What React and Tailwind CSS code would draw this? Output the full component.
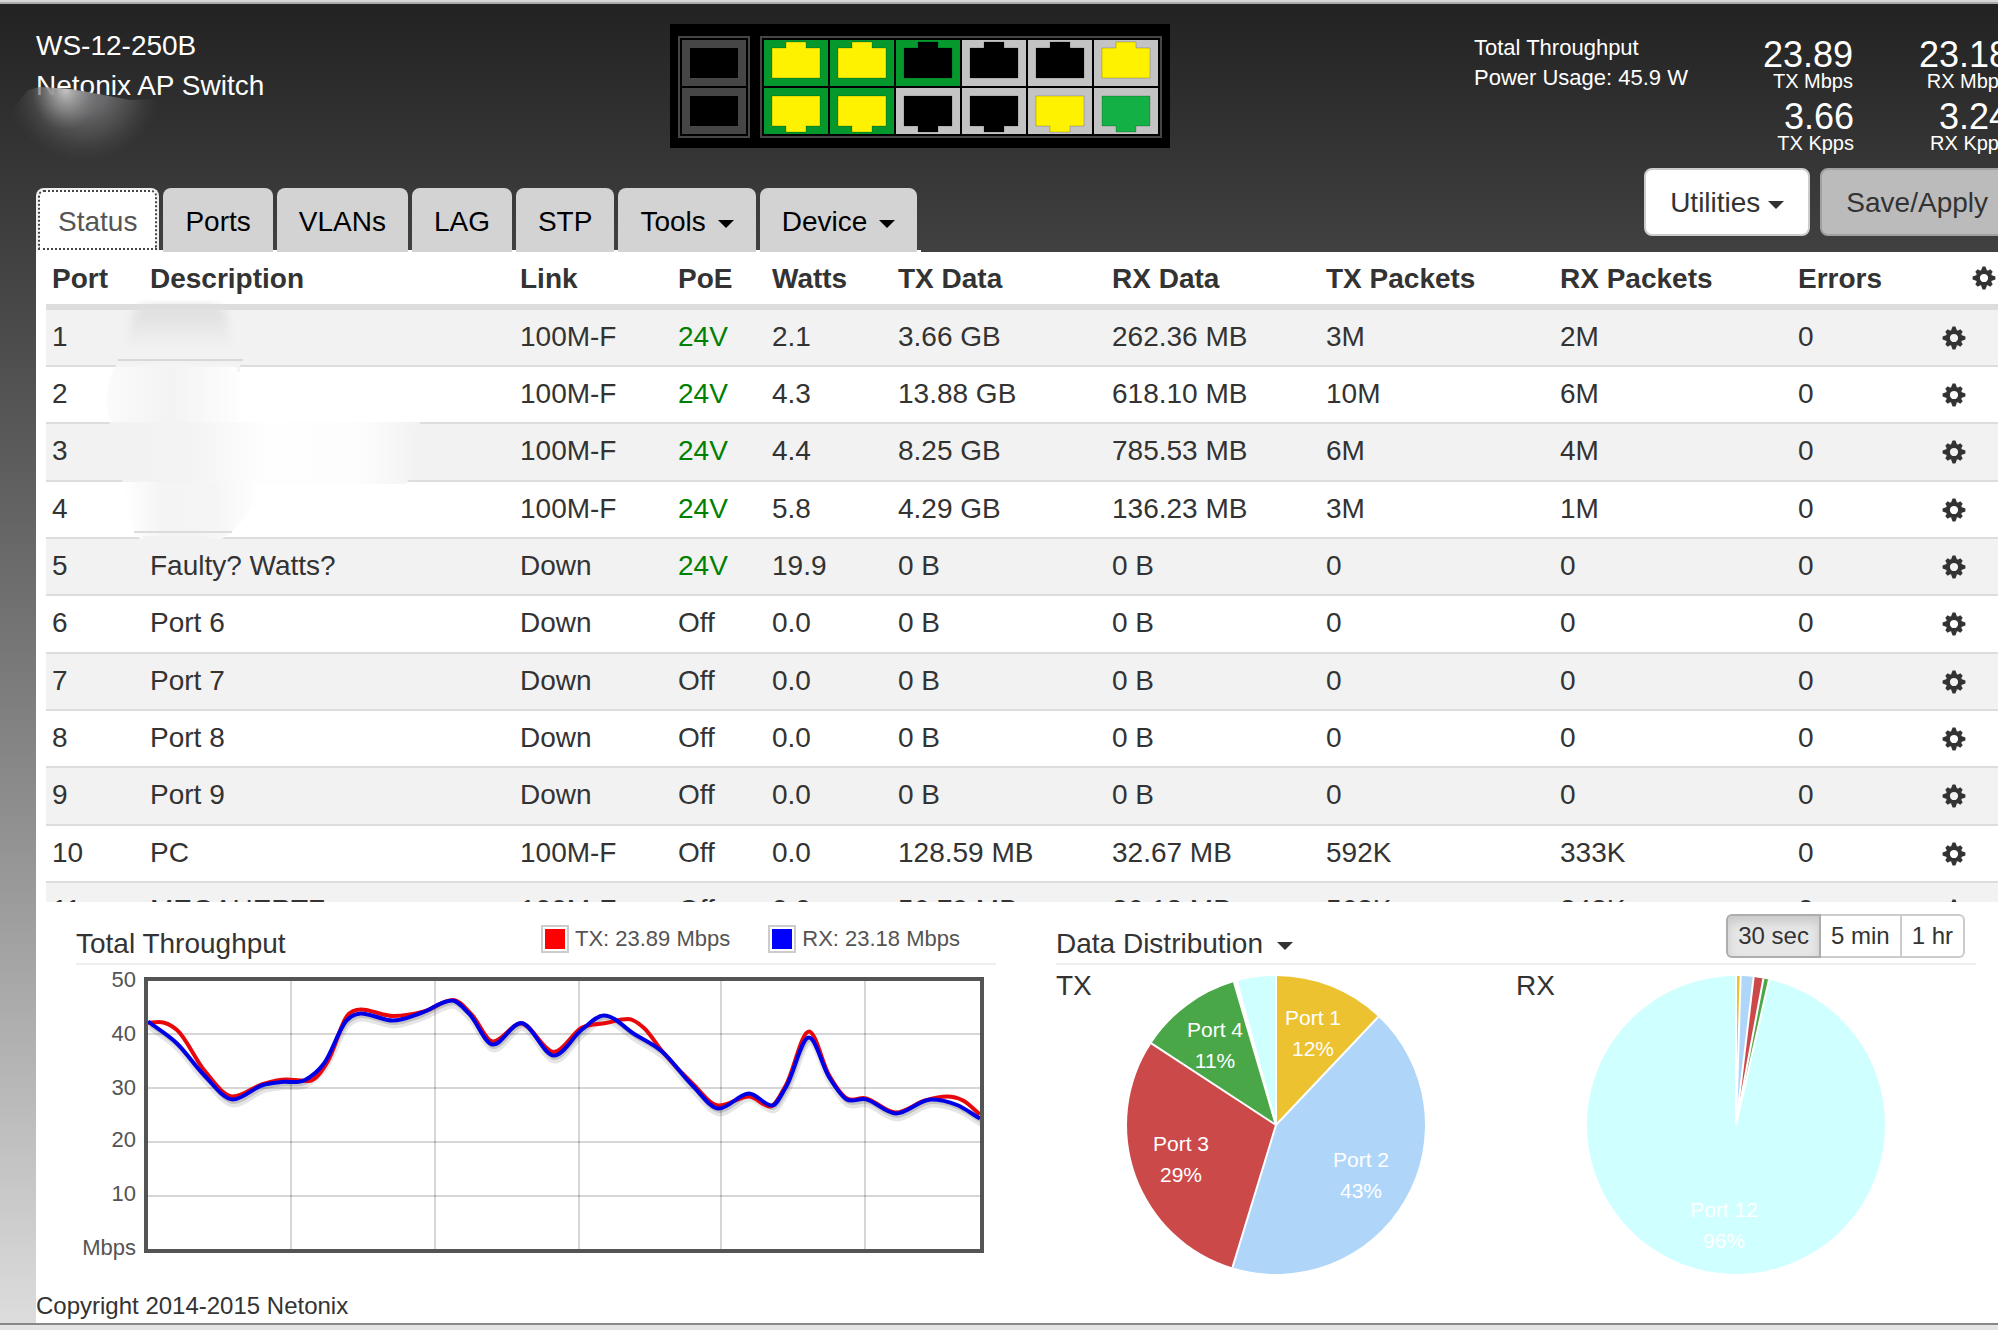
import React from "react";

const TABS = [
  { label: "Status", active: true },
  { label: "Ports" },
  { label: "VLANs" },
  { label: "LAG" },
  { label: "STP" },
  { label: "Tools", menu: true },
  { label: "Device", menu: true },
];

const ROWS = [
  ["1", "", "100M-F", "24V", "2.1", "3.66 GB", "262.36 MB", "3M", "2M", "0"],
  ["2", "", "100M-F", "24V", "4.3", "13.88 GB", "618.10 MB", "10M", "6M", "0"],
  ["3", "", "100M-F", "24V", "4.4", "8.25 GB", "785.53 MB", "6M", "4M", "0"],
  ["4", "", "100M-F", "24V", "5.8", "4.29 GB", "136.23 MB", "3M", "1M", "0"],
  ["5", "Faulty? Watts?", "Down", "24V", "19.9", "0 B", "0 B", "0", "0", "0"],
  ["6", "Port 6", "Down", "Off", "0.0", "0 B", "0 B", "0", "0", "0"],
  ["7", "Port 7", "Down", "Off", "0.0", "0 B", "0 B", "0", "0", "0"],
  ["8", "Port 8", "Down", "Off", "0.0", "0 B", "0 B", "0", "0", "0"],
  ["9", "Port 9", "Down", "Off", "0.0", "0 B", "0 B", "0", "0", "0"],
  ["10", "PC", "100M-F", "Off", "0.0", "128.59 MB", "32.67 MB", "592K", "333K", "0"],
  ["11", "MEGAHERTZ", "100M-F", "Off", "0.0", "56.79 MB", "36.18 MB", "563K", "343K", "0"],
];

const HEADERS = ["Port", "Description", "Link", "PoE", "Watts", "TX Data", "RX Data", "TX Packets", "RX Packets", "Errors"];

const TX_POINTS = [
  [148, 1023], [159, 1022], [177, 1030], [204, 1070], [233, 1096.5], [263, 1084], [286, 1079.5], [309, 1081], [328, 1061], [347, 1016],
  [361, 1009.5], [393, 1016], [424, 1011.5], [453, 1000], [472, 1015], [493, 1041.5], [521, 1023.5], [554, 1052], [582, 1027.5], [606, 1023],
  [628, 1019], [644, 1028], [662, 1051], [692, 1083], [719, 1105.5], [749, 1096.5], [770, 1106.5], [786, 1085], [809, 1031.5], [829, 1075],
  [846, 1098], [865, 1098.1], [896, 1112.5], [925, 1100.5], [947, 1096.5], [963, 1100.5], [980, 1114.5],
];

const RX_POINTS = [
  [148, 1021.5], [177, 1043.5], [204, 1075], [233, 1099.5], [263, 1085], [281, 1082], [305, 1080], [324, 1063.5], [347, 1020], [361, 1013.5],
  [393, 1020.5], [421, 1013], [452, 1000.5], [469, 1013.5], [493, 1044.5], [521, 1023], [554, 1055.5], [582, 1029.5], [604, 1015.5], [635, 1034.5],
  [662, 1051.5], [692, 1085], [719, 1108.5], [749, 1093.5], [772, 1105.5], [786, 1087], [809, 1037.5], [829, 1077], [846, 1099], [865, 1099.1],
  [896, 1113.5], [931, 1099.5], [957, 1105], [980, 1118.5],
];

// Cubic curve through the points, level at each peak and dip.
function smooth(pts) {
  const n = pts.length;
  const h = [];
  const d = [];
  for (let i = 0; i < n - 1; i++) {
    h.push(pts[i + 1][0] - pts[i][0]);
    d.push((pts[i + 1][1] - pts[i][1]) / h[i]);
  }
  const m = pts.map((_, i) => {
    if (i === 0) return d[0];
    if (i === n - 1) return d[n - 2];
    if (d[i - 1] * d[i] <= 0) return 0;
    return (h[i - 1] * d[i] + h[i] * d[i - 1]) / (h[i - 1] + h[i]);
  });
  let out = `M${pts[0][0]} ${pts[0][1]}`;
  for (let i = 0; i < n - 1; i++) {
    const [x0, y0] = pts[i];
    const [x1, y1] = pts[i + 1];
    const t = h[i] / 3;
    out += `C${x0 + t} ${y0 + m[i] * t} ${x1 - t} ${y1 - m[i + 1] * t} ${x1} ${y1}`;
  }
  return out;
}

function Caret({ className = "" }) {
  return (
    <span
      aria-hidden="true"
      className={"inline-block h-0 w-0 border-x-8 border-t-8 border-x-transparent border-t-current align-middle " + className}
    />
  );
}

function Gear() {
  return (
    <svg viewBox="-12 -12 24 24" className="block h-6 w-6" fill="#333" aria-hidden="true">
      <circle r="6.2" fill="none" stroke="#333" strokeWidth="4.2" />
      {[0, 90, 180, 270].map((a) => (
        <path key={a} transform={`rotate(${a})`} d="M-3 -7.4L-1.4 -11.4H1.4L3 -7.4Z" />
      ))}
      {[45, 135, 225, 315].map((a) => (
        <path key={a} transform={`rotate(${a})`} d="M-2.6 -7.4L-1.7 -10.6H1.7L2.6 -7.4Z" />
      ))}
    </svg>
  );
}

function Jack({ x, row, cell, plug }) {
  const up = `M${x + 8} 24h14v-6h20v6h14v30h-48z`;
  const down = `M${x + 8} 72h48v30h-14v6h-20v-6h-14z`;
  return (
    <g>
      <rect x={x} y={row ? 64 : 16} width="64" height="46" fill={cell} />
      <path d={row ? down : up} fill={plug} stroke="#000" strokeOpacity="0.2" />
    </g>
  );
}

const GREEN = "#05982c";
const GREY = "#c3c3c3";
const YELLOW = "#fff200";

function SwitchPanel() {
  const top = [[GREEN, YELLOW], [GREEN, YELLOW], [GREEN, "#000"], [GREY, "#000"], [GREY, "#000"], [GREY, YELLOW]];
  const bottom = [[GREEN, YELLOW], [GREEN, YELLOW], [GREY, "#000"], [GREY, "#000"], [GREY, YELLOW], [GREY, "#12b045"]];
  return (
    <svg viewBox="0 0 500 124" className="h-[124px] w-[500px] shrink-0" role="img" aria-label="Switch ports">
      <rect width="500" height="124" fill="#000" />
      <rect x="9" y="13" width="70" height="100" fill="none" stroke="#464646" strokeWidth="2" />
      <rect x="12" y="16" width="64" height="46" fill="#464646" />
      <rect x="12" y="64" width="64" height="46" fill="#464646" />
      <rect x="20" y="24" width="48" height="30" />
      <rect x="20" y="72" width="48" height="30" />
      <rect x="91" y="13" width="400" height="100" fill="none" stroke="#464646" strokeWidth="2" />
      {top.map(([c, p], i) => (
        <Jack key={i} x={94 + i * 66} row={0} cell={c} plug={p} />
      ))}
      {bottom.map(([c, p], i) => (
        <Jack key={i} x={94 + i * 66} row={1} cell={c} plug={p} />
      ))}
    </svg>
  );
}

function Stat({ value, unit }) {
  return (
    <div className="text-right">
      <div className="text-[36px] leading-9">{value}</div>
      <div className="text-[20px] leading-4">{unit}</div>
    </div>
  );
}

function Header() {
  return (
    <header className="relative">
      <div className="-mr-[11px] flex items-start pt-5 pb-[15px] pl-9 text-white">
        <div className="w-[634px] shrink-0 pt-0.5 text-[28px] leading-10">
          <div>WS-12-250B</div>
          <div>Netonix AP Switch</div>
        </div>
        <SwitchPanel />
        <div className="ml-auto w-[225px] pt-[9px] text-[22px] leading-[30px] whitespace-nowrap">
          <div>Total Throughput</div>
          <div>Power Usage: 45.9 W</div>
        </div>
        <div className="grid grid-cols-2 gap-y-2.5 pt-[13px] pb-0.5">
          <div className="w-[154px]"><Stat value="23.89" unit="TX Mbps" /></div>
          <div className="w-[155px]"><Stat value="23.18" unit="RX Mbps" /></div>
          <Stat value="3.66" unit="TX Kpps" />
          <Stat value="3.24" unit="RX Kpps" />
        </div>
      </div>
      <svg className="pointer-events-none absolute top-[72px] left-2 h-24 w-[160px]" viewBox="0 0 160 96" aria-hidden="true">
        <defs>
          <clipPath id="smudge-edge">
            <path d="M0 40L20 14L32 11L62 13L96 19L122 24L150 23L160 40V96H0Z" />
          </clipPath>
          <radialGradient id="smudge-body" gradientUnits="userSpaceOnUse" cx="0" cy="0" r="1" gradientTransform="translate(76 16) scale(76 70)">
            <stop offset="0" stopColor="#767679" />
            <stop offset="0.3" stopColor="#6e6e70" stopOpacity="0.9" />
            <stop offset="0.65" stopColor="#606062" stopOpacity="0.5" />
            <stop offset="1" stopColor="#484848" stopOpacity="0" />
          </radialGradient>
          <radialGradient id="smudge-glow" gradientUnits="userSpaceOnUse" cx="0" cy="0" r="1" gradientTransform="translate(58 14) scale(34 40)">
            <stop offset="0" stopColor="#c4c4c4" />
            <stop offset="0.5" stopColor="#9a9a9a" stopOpacity="0.6" />
            <stop offset="1" stopColor="#777" stopOpacity="0" />
          </radialGradient>
        </defs>
        <g clipPath="url(#smudge-edge)">
          <rect width="160" height="96" fill="url(#smudge-body)" />
          <rect width="160" height="96" fill="url(#smudge-glow)" />
        </g>
      </svg>
      <div className="-mr-4 flex items-start justify-between pl-9">
        <nav className="mt-5 flex gap-1 border-b-2 border-white pr-1">
          {TABS.map((t) => (
            <a
              key={t.label}
              href="#"
              aria-current={t.active ? "page" : undefined}
              className={
                "-mb-0.5 block rounded-t-lg text-[28px] leading-10 " +
                (t.active
                  ? "border-2 border-[#eee] border-b-white bg-white px-5 pt-3 pb-2 text-[#555] outline-2 -outline-offset-4 outline-dotted outline-[#444]"
                  : "bg-[#d3d3d3] px-[22px] pt-3.5 pb-2.5 text-black")
              }
            >
              {t.label}
              {t.menu && <Caret className="ml-3" />}
            </a>
          ))}
        </nav>
        <div className="flex gap-2.5 text-[28px] leading-10 text-[#333]">
          <button type="button" className="rounded-lg border-2 border-[#ccc] bg-white px-6 pt-[13px] pb-[11px]">
            Utilities
            <Caret className="ml-2" />
          </button>
          <button type="button" className="rounded-lg border-2 border-[#a0a0a0] bg-[#bbb] px-6 pt-[13px] pb-[11px]">
            Save/Apply
          </button>
        </div>
      </div>
    </header>
  );
}

// Smeared area that hides the descriptions of the first four ports.
function Redaction() {
  return (
    <svg className="pointer-events-none absolute top-[48px] left-11 h-[250px] w-[360px]" viewBox="80 300 360 250" aria-hidden="true">
      <defs>
        <linearGradient id="r1" x1="0" y1="0" x2="0" y2="1">
          <stop offset="0" stopColor="#dcdcdc" />
          <stop offset="0.5" stopColor="#e8e8e8" />
          <stop offset="1" stopColor="#f2f2f2" />
        </linearGradient>
        <linearGradient id="r2" x1="0" y1="0" x2="1" y2="0">
          <stop offset="0" stopColor="#fbfbfb" />
          <stop offset="0.4" stopColor="#f3f3f3" />
          <stop offset="0.9" stopColor="#fff" />
        </linearGradient>
        <linearGradient id="r3" x1="0" y1="0" x2="1" y2="0">
          <stop offset="0" stopColor="#f2f2f2" />
          <stop offset="0.25" stopColor="#f4f3f3" />
          <stop offset="0.5" stopColor="#fefefe" />
          <stop offset="0.8" stopColor="#fdfdfd" />
          <stop offset="1" stopColor="#f2f2f2" />
        </linearGradient>
        <linearGradient id="r4" x1="0" y1="0" x2="1" y2="0">
          <stop offset="0" stopColor="#fff" />
          <stop offset="0.3" stopColor="#f4f4f4" />
          <stop offset="0.65" stopColor="#f5f5f5" />
          <stop offset="1" stopColor="#fff" />
        </linearGradient>
        <filter id="soft" x="-20%" y="-20%" width="140%" height="140%">
          <feGaussianBlur stdDeviation="4" />
        </filter>
      </defs>
      <path d="M134 312Q138 305 152 305H206Q220 305 226 312L230 340V350H128V330Z" fill="url(#r1)" filter="url(#soft)" />
      <path d="M116 364H240V372H116Z" fill="#f4f4f4" />
      <path d="M118 359H243V361H118Z" fill="#d8d8d8" />
      <path d="M114 367H236L248 400L262 424H110Q102 396 114 367Z" fill="url(#r2)" />
      <path d="M110 422H420Q410 452 414 470L406 484H124L110 460Z" fill="url(#r3)" />
      <path d="M123 482H262Q250 520 222 539H140Q126 520 123 482Z" fill="url(#r4)" />
      <path d="M143 536H209V540H143Z" fill="#f2f2f2" />
      <path d="M134 531H232V533H134Z" fill="#dcdcdc" />
    </svg>
  );
}

function PortTable() {
  return (
    <div className="relative h-[650px] overflow-hidden pl-2.5">
      <table className="w-full table-fixed border-separate border-spacing-0 text-left text-[28px] leading-10 text-[#333]">
        <colgroup>
          <col className="w-[98px]" />
          <col />
          <col className="w-[158px]" />
          <col className="w-[94px]" />
          <col className="w-[126px]" />
          <col className="w-[214px]" />
          <col className="w-[214px]" />
          <col className="w-[234px]" />
          <col className="w-[238px]" />
          <col className="w-[137px]" />
          <col className="w-[69px]" />
        </colgroup>
        <thead>
          <tr className="h-[58px]">
            {HEADERS.map((h) => (
              <th key={h} scope="col" className="border-b-6 border-[#ddd] px-1.5 pt-0.5 font-bold whitespace-nowrap">
                {h}
              </th>
            ))}
            <th scope="col" className="border-b-6 border-[#ddd] pr-0.5">
              <button type="button" aria-label="Table settings" className="ml-auto block">
                <Gear />
              </button>
            </th>
          </tr>
        </thead>
        <tbody>
          {ROWS.map((r) => (
            <tr key={r[0]} className="h-[57px] odd:bg-[#f2f2f2] nth-[3n]:h-[58px]">
              {r.map((c, i) => (
                <td
                  key={i}
                  className={"border-b-2 border-[#ddd] px-1.5 pb-0.5 whitespace-nowrap " + (c === "24V" ? "text-[#008000]" : "")}
                >
                  {c}
                </td>
              ))}
              <td className="border-b-2 border-[#ddd] pl-[13px]">
                <button type="button" aria-label={`Port ${r[0]} settings`} className="block">
                  <Gear />
                </button>
              </td>
            </tr>
          ))}
        </tbody>
      </table>
      <Redaction />
    </div>
  );
}

function Legend({ swatch, text }) {
  return (
    <div className="flex items-center gap-1.5">
      <span className="border-2 border-[#ccc] p-0.5">
        <span className={"block h-5 w-5 " + swatch} />
      </span>
      <span className="text-[22px] leading-7 text-[#545454]">{text}</span>
    </div>
  );
}

function ThroughputChart() {
  const tx = smooth(TX_POINTS);
  const rx = smooth(RX_POINTS);
  const labels = [["50", 987], ["40", 1041], ["30", 1095], ["20", 1147], ["10", 1201], ["Mbps", 1255]];
  return (
    <svg viewBox="76 965 920 300" className="block w-full" role="img" aria-label="Total throughput chart">
      <g fontFamily="Liberation Sans, Arial, sans-serif" fontSize="22" fill="#545454" textAnchor="end">
        {labels.map(([t, y]) => (
          <text key={t} x="136" y={y}>{t}</text>
        ))}
      </g>
      <g stroke="#000" strokeOpacity="0.16" strokeWidth="2">
        {[291, 435, 579, 721, 865].map((x) => (
          <path key={x} d={`M${x} 980V1250`} />
        ))}
        {[1034, 1088, 1142, 1196].map((y) => (
          <path key={y} d={`M148 ${y}H980`} />
        ))}
      </g>
      <g fill="none" strokeLinejoin="round">
        <path d={rx} stroke="#000" strokeOpacity="0.1" strokeWidth="6" transform="translate(1 5)" />
        <path d={rx} stroke="#000" strokeOpacity="0.15" strokeWidth="3" transform="translate(1 3)" />
        <path d={tx} stroke="#e8080c" strokeWidth="4" />
        <path d={rx} stroke="#0000e6" strokeWidth="4" />
      </g>
      <rect x="146" y="979" width="836" height="272" fill="none" stroke="#545454" strokeWidth="4" />
    </svg>
  );
}

function Pie({ slices, labels, name }) {
  const pt = (deg) => {
    const a = (deg * Math.PI) / 180;
    return `${149 * Math.sin(a)} ${-149 * Math.cos(a)}`;
  };
  return (
    <svg viewBox="-150 -150 300 300" className="h-[300px] w-[300px]" role="img" aria-label={name}>
      {slices.map(([from, to, fill]) => (
        <path
          key={from}
          d={`M0 0L${pt(from)}A149 149 0 ${to - from > 180 ? 1 : 0} 1 ${pt(to)}Z`}
          fill={fill}
        />
      ))}
      {slices.map(([from]) => (
        <path key={from} d={`M0 0L${pt(from)}`} stroke="#fff" strokeWidth="2" />
      ))}
      <g fontFamily="Liberation Sans, Arial, sans-serif" fontSize="21" fill="#fff" textAnchor="middle">
        {labels.map(([port, share, x, y]) => (
          <React.Fragment key={port}>
            <text x={x} y={y}>{port}</text>
            <text x={x} y={y + 31}>{share}</text>
          </React.Fragment>
        ))}
      </g>
    </svg>
  );
}

const C1 = "#edc230";
const C2 = "#afd6f9";
const C3 = "#cb4a49";
const C4 = "#4aa748";
const C5 = "#cffffe";

function Charts() {
  return (
    <div className="grid grid-cols-2 gap-[60px] pr-[22px] pl-10 text-[28px] text-[#333]">
      <section>
        <div className="flex h-[63px] items-end justify-between border-b-2 border-[#eee]">
          <h2 className="leading-[38px]">Total Throughput</h2>
          <div className="mr-9 mb-2.5 flex gap-[38px]">
            <Legend swatch="bg-[#ff0000]" text="TX: 23.89 Mbps" />
            <Legend swatch="bg-[#0000ff]" text="RX: 23.18 Mbps" />
          </div>
        </div>
        <ThroughputChart />
      </section>
      <section>
        <div className="flex h-[63px] items-end justify-between border-b-2 border-[#eee]">
          <h2 className="leading-[38px]">
            <button type="button">
              Data Distribution
              <Caret className="ml-3.5" />
            </button>
          </h2>
          <div className="mr-[11px] mb-[5px] flex text-[24px] leading-10">
            <button type="button" className="rounded-l-md border-2 border-[#adadad] bg-[#e6e6e6] px-2.5 inset-shadow-[0_6px_10px_#00000020]">
              30 sec
            </button>
            <button type="button" className="border-y-2 border-r-2 border-[#ccc] bg-white px-2.5">5 min</button>
            <button type="button" className="rounded-r-md border-y-2 border-r-2 border-[#ccc] bg-white px-2.5">1 hr</button>
          </div>
        </div>
        <div className="grid grid-cols-2 pt-2.5">
          <div className="flex">
            <h3 className="-mt-2 w-[70px] leading-[38px]">TX</h3>
            <Pie
              name="TX distribution"
              slices={[
                [0, 43.4, C1],
                [43.4, 197, C2],
                [197, 303.2, C3],
                [303.2, 343.6, C4],
                [343.6, 344.8, "#fff"],
                [344.8, 360, C5],
              ]}
              labels={[
                ["Port 1", "12%", 37, -100],
                ["Port 2", "43%", 85, 42],
                ["Port 3", "29%", -95, 26],
                ["Port 4", "11%", -61, -88],
              ]}
            />
          </div>
          <div className="flex">
            <h3 className="-mt-2 w-[70px] leading-[38px]">RX</h3>
            <Pie
              name="RX distribution"
              slices={[
                [0, 1.8, C1],
                [1.8, 6.8, C2],
                [6.8, 10.6, C3],
                [10.6, 12.8, C4],
                [12.8, 360, C5],
              ]}
              labels={[["Port 12", "96%", -12, 92]]}
            />
          </div>
        </div>
      </section>
    </div>
  );
}

export default function App() {
  return (
    <div className="flex min-h-screen flex-col overflow-hidden bg-linear-to-b from-[#222] to-[#dedede] font-['Liberation_Sans',Arial,sans-serif]">
      <div className="h-1 border-b-2 border-[#aaa] bg-[#d8d8d8]" />
      <Header />
      <main className="ml-9 flex-1 bg-white">
        <PortTable />
        <Charts />
        <footer className="pt-3.5 text-[24px] leading-[34px] text-[#333]">Copyright 2014-2015 Netonix</footer>
      </main>
      <div className="h-[7px] border-t-2 border-[#888] bg-[#e4e4e4]" />
    </div>
  );
}
